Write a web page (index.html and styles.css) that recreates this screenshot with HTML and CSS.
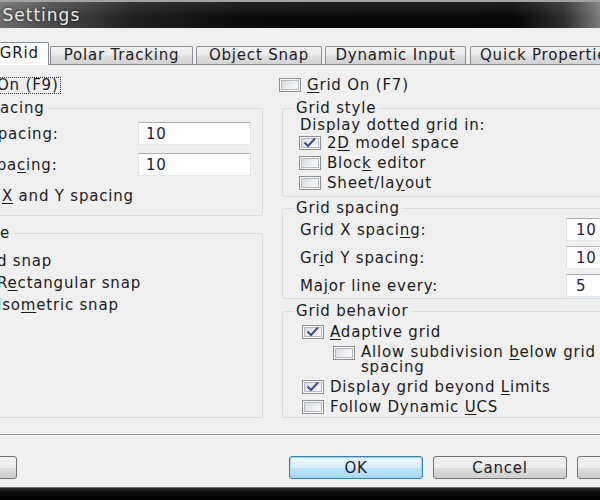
FILE: index.html
```html
<!DOCTYPE html>
<html lang="en">
<head>
<meta charset="utf-8">
<title>Drafting Settings</title>
<link rel="stylesheet" href="styles.css">
</head>
<body>
<div class="titlebar"><span class="title">Drafting Settings</span></div>
<div class="dialog">
  <div class="tabs">
    <div class="tab sel">Snap and GRid</div>
    <div class="tab w-polar">Polar Tracking</div>
    <div class="tab w-osnap">Object Snap</div>
    <div class="tab w-dyn">Dynamic Input</div>
    <div class="tab w-qp">Quick Properties</div>
  </div>
  <div class="panel">
    <div class="col">
      <div class="check snapon"><span class="cb"></span><span class="focus">Snap On (F9)</span></div>
      <fieldset class="group snapsp">
        <legend>Snap spacing</legend>
        <div class="gbody">
          <div class="field"><span class="label">Snap X spacing:</span><input class="num" value="10"></div>
          <div class="field f2"><span class="label">Snap Y spa<u>c</u>ing:</span><input class="num" value="10"></div>
          <div class="check equal"><span class="cb"></span><span>Equal <u>X</u> and Y spacing</span></div>
        </div>
      </fieldset>
      <fieldset class="group snaptype">
        <legend>Snap type</legend>
        <div class="gbody">
          <div class="opt gridsnap"><span class="rb on"></span><span>Grid snap</span></div>
          <div class="opt sub"><span class="rb on"></span><span>R<u>e</u>ctangular snap</span></div>
          <div class="opt sub"><span class="rb"></span><span>Iso<u>m</u>etric snap</span></div>
        </div>
      </fieldset>
    </div>
    <div class="col">
      <div class="check gridon"><span class="cb"></span><span><u>G</u>rid On (F7)</span></div>
      <fieldset class="group gstyle">
        <legend>Grid style</legend>
        <div class="gbody">
          <div class="disp">Display dotted grid in:</div>
          <div class="check row20"><span class="cb"><svg viewBox="0 0 22 14" width="22" height="14"><path d="M5.5 6.5 L9 10 L16 2.5" fill="none" stroke="#3b4f8e" stroke-width="2"/></svg></span><span>2<u>D</u> model space</span></div>
          <div class="check row20"><span class="cb"></span><span>Bloc<u>k</u> editor</span></div>
          <div class="check row20"><span class="cb"></span><span>Sheet/la<u>y</u>out</span></div>
        </div>
      </fieldset>
      <fieldset class="group gspacing">
        <legend>Grid spacing</legend>
        <div class="gbody">
          <div class="field"><span class="label">Grid X spaci<u>n</u>g:</span><input class="num" value="10"></div>
          <div class="field"><span class="label">Gr<u>i</u>d Y spacing:</span><input class="num" value="10"></div>
          <div class="field"><span class="label">Ma<u>j</u>or line every:</span><input class="num" value="5"></div>
        </div>
      </fieldset>
      <fieldset class="group gbeh">
        <legend>Grid behavior</legend>
        <div class="gbody">
          <div class="check row22"><span class="cb"><svg viewBox="0 0 22 14" width="22" height="14"><path d="M5.5 6.5 L9 10 L16 2.5" fill="none" stroke="#3b4f8e" stroke-width="2"/></svg></span><span><u>A</u>daptive grid</span></div>
          <div class="check subdiv"><span class="cb"></span><span class="two">Allow subdivision <u>b</u>elow grid<br>spacing</span></div>
          <div class="check row20 beyond"><span class="cb"><svg viewBox="0 0 22 14" width="22" height="14"><path d="M5.5 6.5 L9 10 L16 2.5" fill="none" stroke="#3b4f8e" stroke-width="2"/></svg></span><span>Display grid beyond <u>L</u>imits</span></div>
          <div class="check row20"><span class="cb"></span><span>Follow Dynamic <u>U</u>CS</span></div>
        </div>
      </fieldset>
    </div>
  </div>
  <div class="buttons">
    <button class="btn first">Options...</button>
    <button class="btn def">OK</button>
    <button class="btn">Cancel</button>
    <button class="btn">Help</button>
  </div>
</div>
<div class="frame"></div>
</body>
</html>
```

FILE: styles.css
```css
* { box-sizing: border-box; }

html, body {
  margin: 0;
  padding: 0;
  width: 600px;
  height: 500px;
  overflow: hidden;
}

body {
  background: #f0f0f0;
  font-family: "DejaVu Sans", "Noto Sans", sans-serif;
  font-size: 15px;
  letter-spacing: 0.8px;
  color: #1b1b1b;
}

u { text-underline-offset: 2px; }

/* title bar */
.titlebar {
  height: 28px;
  border-top: 2px solid #a3a3a3;
  background:
    linear-gradient(to bottom, rgba(255,255,255,0.10), rgba(255,255,255,0) 60%),
    linear-gradient(to right, #6d6d6d 0%, #4d4d4d 8%, #1f1f1f 22%, #0b0b0b 40%, #070707 86%, #2e2e2e 94%, #7a7a7a 100%);
  display: flex;
  align-items: center;
  white-space: nowrap;
  overflow: hidden;
}

.title {
  margin-left: -81px;
  font-size: 17px;
  letter-spacing: 1px;
  color: #ececec;
  text-shadow: 0 0 3px rgba(0,0,0,0.7);
}

/* dialog */
.dialog {
  margin-left: -150px;
  width: 900px;
}

.tabs {
  display: flex;
  align-items: flex-end;
  gap: 3px;
  height: 36px;
  padding-left: 57px;
}

.tab {
  height: 18px;
  border: 1px solid #898c95;
  border-bottom: 0;
  border-radius: 2px 2px 0 0;
  background: linear-gradient(#f3f3f3, #ebebeb 45%, #dedede 55%, #d3d3d3);
  line-height: 16px;
  text-align: center;
  white-space: nowrap;
}

.tab.sel {
  position: relative;
  width: 142px;
  height: 23px;
  margin-right: -2px;
  margin-bottom: -1px;
  background: #fff;
  line-height: 21px;
}

.w-polar { width: 143px; }
.w-osnap { width: 126px; }
.w-dyn { width: 141px; }
.w-qp { width: 160px; margin-left: 1px; text-align: left; padding-left: 9px; }

.panel {
  height: 371px;
  border-top: 1px solid #898c95;
  border-bottom: 1px solid #a0a0a0;
  box-shadow: inset 0 -1px 0 #ffffff;
  padding-top: 11px;
  display: grid;
  grid-template-columns: 413px 1fr;
  grid-template-rows: 342px;
  column-gap: 19px;
}

.col {
  display: flex;
  flex-direction: column;
  min-width: 0;
}

/* group boxes */
.group {
  margin: 0;
  padding: 0;
  border: 1px solid #d5dfe5;
  border-radius: 3px;
  min-width: 0;
}

.group legend {
  padding: 0 2px;
  line-height: 17px;
  margin-left: 11px;
  white-space: nowrap;
}

/* checkboxes / radios */
.check {
  display: flex;
  align-items: center;
  height: 18px;
  white-space: nowrap;
}

.cb {
  flex: none;
  display: block;
  width: 22px;
  height: 14px;
  margin-right: 6px;
  border: 1px solid #8e8f8f;
  background: linear-gradient(135deg, #cfd2d7 0%, #eeeff1 55%, #fbfbfb 100%);
  box-shadow: inset 0 0 0 1px #f7f7f7, inset 0 0 0 2px #b7bbc1;
}

.cb svg {
  display: block;
  margin: -1px;
}

.opt {
  display: flex;
  align-items: center;
  height: 22px;
  white-space: nowrap;
}

.rb {
  flex: none;
  width: 22px;
  height: 14px;
  margin-right: 6px;
  border: 1px solid #8e8f8f;
  border-radius: 50%;
  background: radial-gradient(circle, #e9eaec, #fdfdfd);
}

.rb.on { background: radial-gradient(circle, #2d5ba7 30%, #e9eaec 34%, #fdfdfd); }

.focus {
  border: 1px dotted #3a3a3a;
  padding: 0 1px;
  line-height: 15px;
}

/* fields */
.field {
  display: flex;
  align-items: center;
  height: 23px;
  white-space: nowrap;
}

.field + .field { margin-top: 5px; }

.num {
  flex: none;
  width: 113px;
  height: 23px;
  margin: 0 11px 0 auto;
  padding: 0 0 0 7px;
  border: 1px solid;
  border-color: #abadb3 #dbdfe6 #e3e9ef #e2e3ea;
  background: #fff;
  font: inherit;
  letter-spacing: inherit;
  color: #221b3d;
  outline: none;
}

/* left column */
.snapon { margin-left: 70.5px; }

.snapsp { margin: 6px 0 0 70px; }
.snapsp legend { margin-left: 11.5px; }
.snapsp .gbody { padding: 5px 0 10px 0; }
.snapsp .label { padding-left: 5px; }
.snapsp .field.f2 { margin-top: 8px; }
.equal { margin-top: 11px; margin-left: 1.5px; }

.snaptype { margin: 9px 0 0 70px; flex: 1; }
.snaptype legend { margin-left: 3.8px; }
.snaptype .gbody { padding-top: 8px; }
.gridsnap { margin-left: 23.6px; }
.sub { margin-left: 48px; }

/* right column */
.gridon { margin-left: -3px; }

.gstyle { margin-top: 6px; }
.gstyle .gbody { padding: 0 0 3px 16px; }
.disp { margin: 1px 0 0 1px; line-height: 15px; white-space: nowrap; }
.row20 { height: 20px; }
.row22 { height: 22px; }

.gspacing { margin-top: 3px; }
.gspacing .gbody { padding: 1px 0 1px 17px; }
.gspacing .label { flex: none; width: 266px; }
.gspacing .num { width: 160px; margin: 0; padding-left: 9px; }

.gbeh { margin-top: 4px; }
.gbeh .gbody { padding: 1px 0 0 19px; }
.subdiv {
  align-items: flex-start;
  height: 30px;
  margin: 2px 0 0 31px;
}
.subdiv .cb { margin-top: 1px; }
.two { line-height: 15px; }
.beyond { margin-top: 2px; }

/* buttons */
.buttons {
  display: flex;
  gap: 10px;
  margin-top: 21px;
  padding: 0 39px 0 33px;
}

.btn {
  flex: none;
  width: 134px;
  height: 23px;
  padding: 0;
  border: 1px solid #707070;
  border-radius: 3px;
  background: linear-gradient(#f2f2f2, #ebebeb 50%, #dddddd 50%, #cfcfcf);
  font: inherit;
  letter-spacing: inherit;
  color: #1b1b1b;
  text-align: center;
}

.btn.first { margin-right: auto; }

.btn.def {
  border-color: #3c7fb1;
  background: linear-gradient(#eaf6fd, #d9f0fc 50%, #bee6fd 50%, #a7d9f5);
  box-shadow: inset 0 0 0 1px #9fd6f3;
}

.frame {
  margin-top: 8px;
  height: 13px;
  border-top: 1px solid #6a6a6a;
  background: linear-gradient(#2b2b2b, #0a0a0a 40%, #000);
}
```
